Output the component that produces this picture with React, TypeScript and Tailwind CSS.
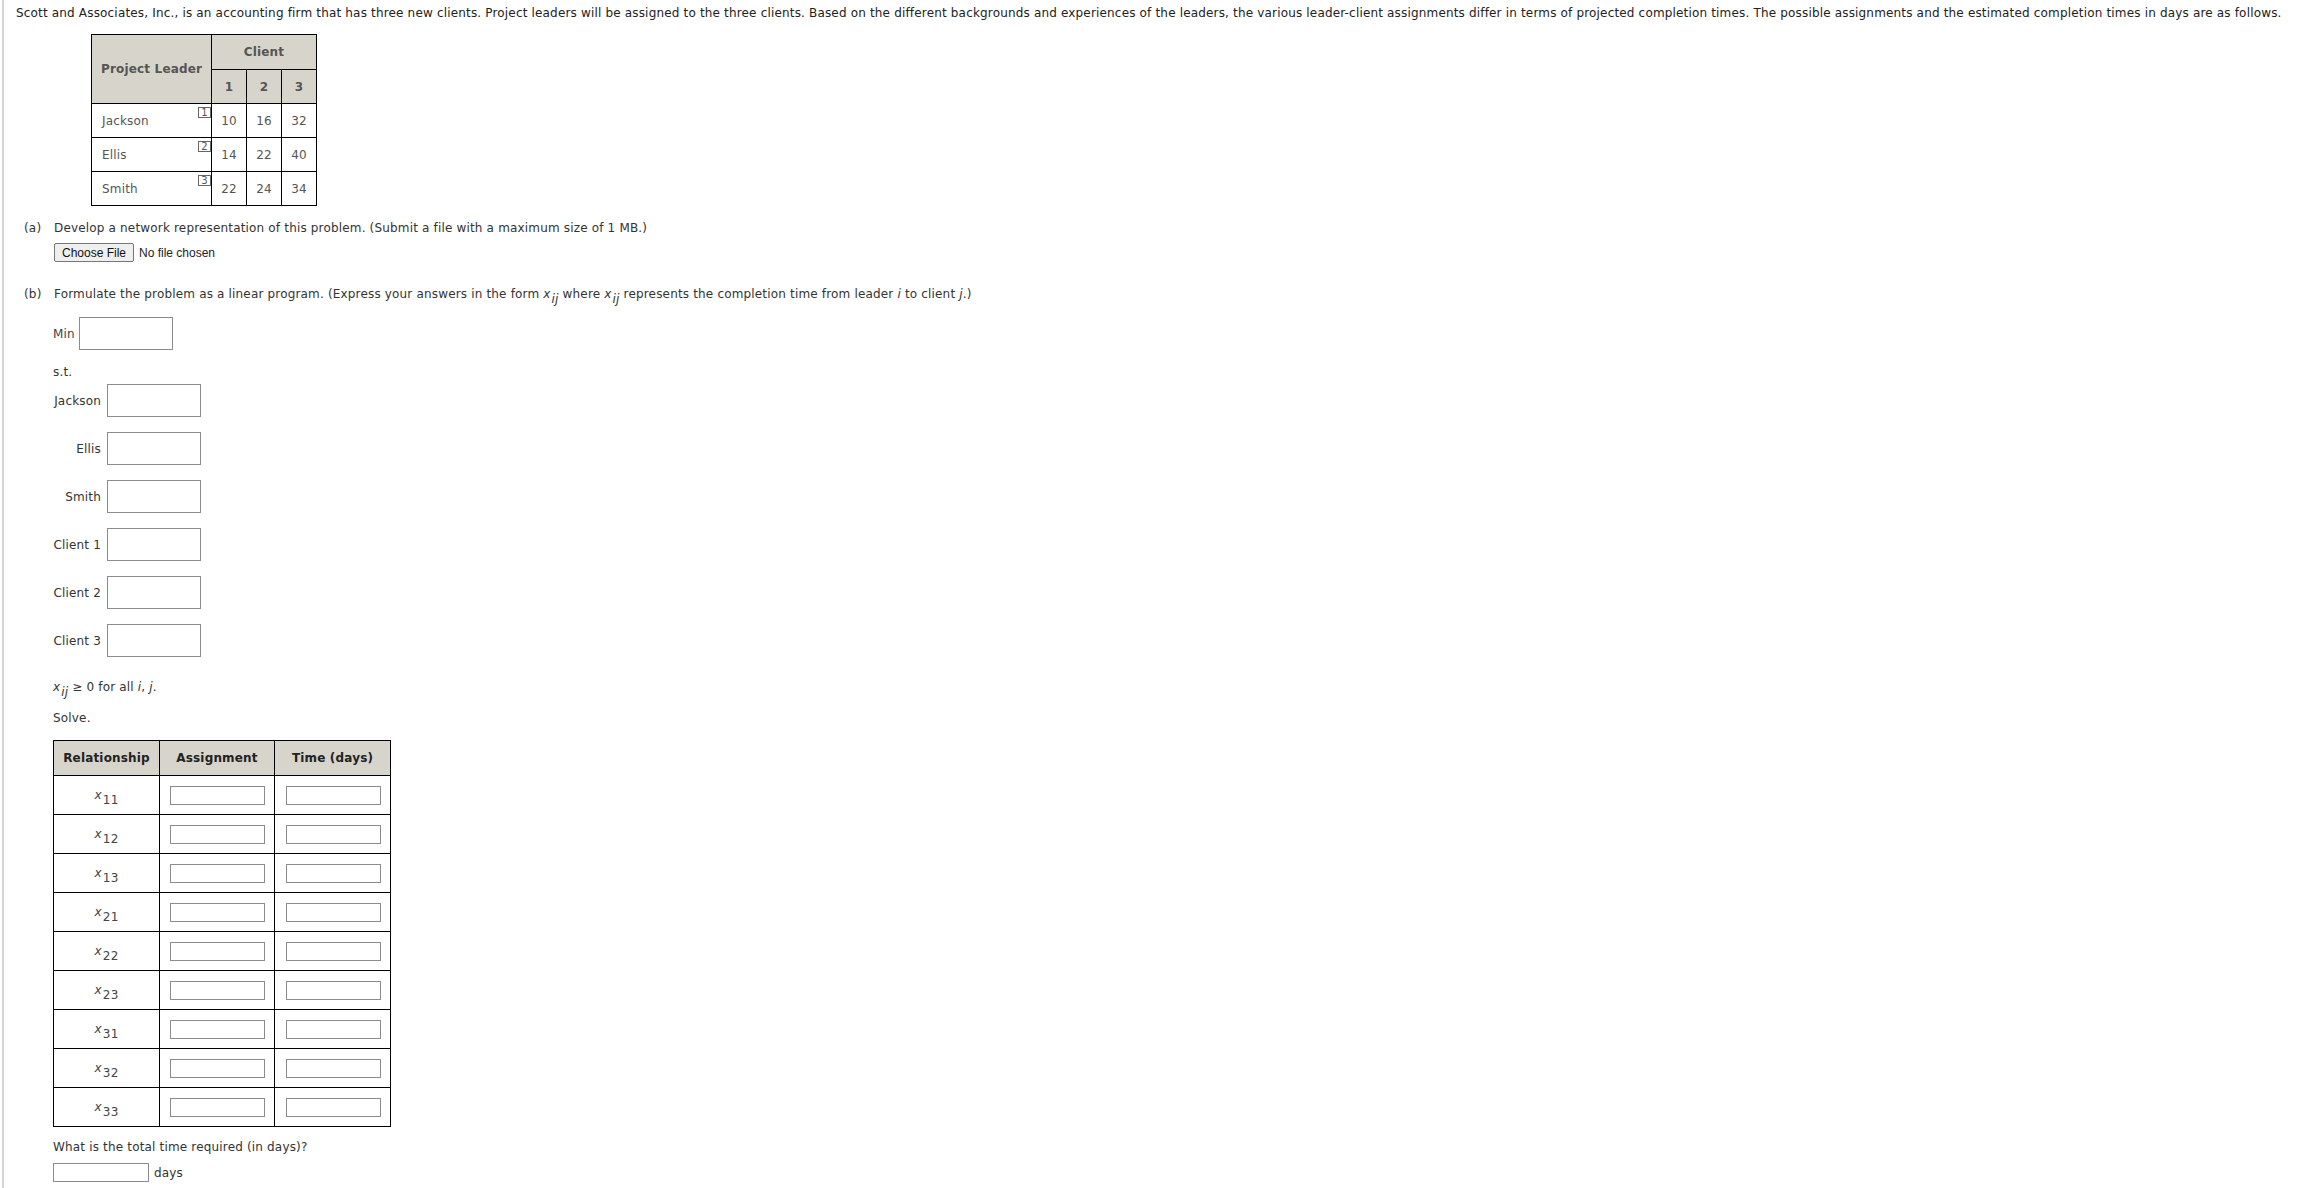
import React from "react";

// Leader-client completion times (days)
const leaders = [
  { name: "Jackson", times: [10, 16, 32] },
  { name: "Ellis", times: [14, 22, 40] },
  { name: "Smith", times: [22, 24, 34] },
];

const constraints = ["Jackson", "Ellis", "Smith", "Client 1", "Client 2", "Client 3"];

const pairs = ["11", "12", "13", "21", "22", "23", "31", "32", "33"];

const Box = ({ className = "" }: { className?: string }) => (
  <input type="text" className={"block border border-[#8c8c8c] bg-white outline-none " + className} />
);

// x with subscript, as used in the text and the table
const Xsub = ({ sub, italicSub = false }: { sub: string; italicSub?: boolean }) => (
  <span>
    <i>x</i>
    <sub className="ml-[1px] text-[12px] bottom-[-0.4em]">{italicSub ? <i>{sub}</i> : sub}</sub>
  </span>
);

export default function App() {
  return (
    <div className="min-h-[1188px] bg-white font-['DejaVu_Sans',sans-serif] text-[12px] leading-[16px] tracking-[0.17px] text-[#333]">
      <div className="ml-[2px] min-h-[1188px] border-l-2 border-[#d4d4d4] pl-[12px]">
        <p className="whitespace-nowrap pt-[5px] text-[#222]">
          Scott and Associates, Inc., is an accounting firm that has three new clients. Project leaders will be assigned to the three clients. Based on the different backgrounds and experiences of the leaders, the various leader-client assignments differ in terms of projected completion times. The possible assignments and the estimated completion times in days are as follows.
        </p>

        {/* leader / client table */}
        <table className="ml-[75px] mt-[13px] border-collapse text-[#555]">
          <tbody>
            <tr>
              <td rowSpan={2} className="w-[120px] border border-black bg-[#d7d4cc] pl-[9px] font-bold">
                Project Leader
              </td>
              <td colSpan={3} className="h-[35px] border border-black bg-[#d7d4cc] text-center font-bold">
                Client
              </td>
            </tr>
            <tr>
              {[1, 2, 3].map((c) => (
                <td key={c} className="h-[34px] w-[35px] border border-black bg-[#d7d4cc] text-center font-bold">
                  {c}
                </td>
              ))}
            </tr>
            {leaders.map((l, i) => (
              <tr key={l.name}>
                <td className="relative h-[34px] border border-black pl-[10px]">
                  {l.name}
                  <span className="absolute right-0 top-[3px] flex h-[11px] w-[13px] items-center justify-center border border-[#666] text-[10px] leading-none tracking-normal text-[#555]">
                    {i + 1}
                  </span>
                </td>
                {l.times.map((t, j) => (
                  <td key={j} className="border border-black text-center">
                    {t}
                  </td>
                ))}
              </tr>
            ))}
          </tbody>
        </table>

        {/* part (a) */}
        <div className="mt-[14px] flex">
          <span className="w-[38px] pl-[8px]">(a)</span>
          <span>Develop a network representation of this problem. (Submit a file with a maximum size of 1 MB.)</span>
        </div>
        <div className="ml-[38px] mt-[7px] flex items-center font-['Liberation_Sans',sans-serif] text-[12px] tracking-normal">
          <button className="h-[19px] w-[80px] rounded-[2px] border border-[#767676] bg-[#efefef] text-[#111]">
            Choose File
          </button>
          <span className="ml-[5px] text-[#222]">No file chosen</span>
        </div>

        {/* part (b) */}
        <div className="mt-[24px] flex">
          <span className="w-[38px] pl-[8px]">(b)</span>
          <span>
            Formulate the problem as a linear program. (Express your answers in the form <Xsub sub="ij" italicSub /> where{" "}
            <Xsub sub="ij" italicSub /> represents the completion time from leader <i>i</i> to client <i>j</i>.)
          </span>
        </div>

        <div className="ml-[37px]">
          <div className="mt-[15px] flex items-center">
            <span className="w-[26px] text-[#444]">Min</span>
            <Box className="h-[33px] w-[94px]" />
          </div>

          <div className="mt-[14px]">s.t.</div>

          <div className="mt-[4px] flex flex-col gap-[15px]">
            {constraints.map((c) => (
              <div key={c} className="flex items-center">
                <span className="w-[48px] text-right">{c}</span>
                <Box className="ml-[6px] h-[33px] w-[94px]" />
              </div>
            ))}
          </div>

          <div className="mt-[22px]">
            <Xsub sub="ij" italicSub /> ≥ 0 for all <i>i</i>, <i>j</i>.
          </div>
          <div className="mt-[15px]">Solve.</div>

          {/* assignment table */}
          <table className="mt-[14px] border-collapse">
            <thead>
              <tr className="bg-[#d7d4cc] text-[#222]">
                <th className="h-[35px] w-[106px] border border-black font-bold">Relationship</th>
                <th className="w-[115px] border border-black font-bold">Assignment</th>
                <th className="w-[116px] border border-black font-bold">Time (days)</th>
              </tr>
            </thead>
            <tbody>
              {pairs.map((p) => (
                <tr key={p}>
                  <td className="h-[39px] border border-black text-center text-[#444]">
                    <Xsub sub={p} />
                  </td>
                  <td className="border border-black pl-[10px]">
                    <Box className="h-[19px] w-[95px]" />
                  </td>
                  <td className="border border-black pl-[11px]">
                    <Box className="h-[19px] w-[95px]" />
                  </td>
                </tr>
              ))}
            </tbody>
          </table>

          <div className="mt-[12px]">What is the total time required (in days)?</div>
          <div className="mt-[8px] flex items-center">
            <Box className="h-[19px] w-[96px]" />
            <span className="ml-[5px]">days</span>
          </div>
        </div>
      </div>
    </div>
  );
}
